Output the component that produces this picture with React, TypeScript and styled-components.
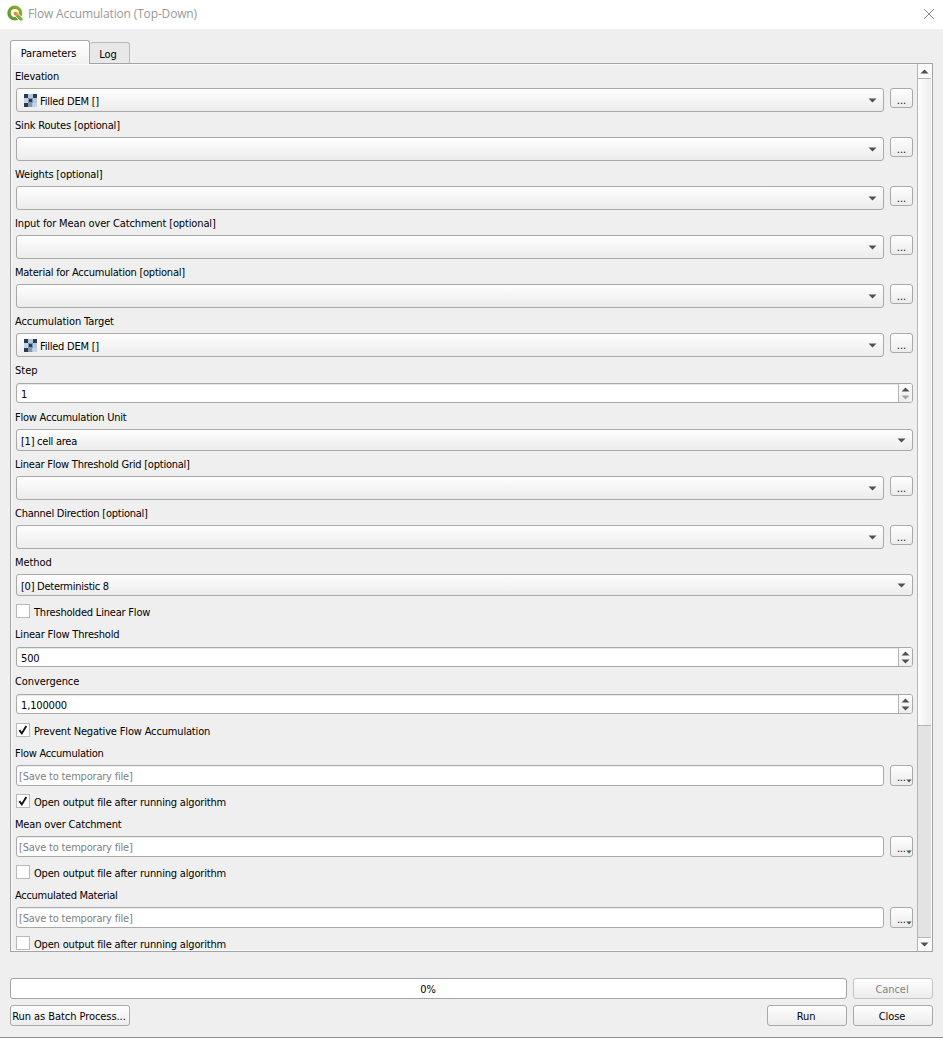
import React from "react";
import styled, { createGlobalStyle, css } from "styled-components";

const Global = createGlobalStyle`
  * { box-sizing: border-box; }
  body { margin: 0; background: #efefef; }
`;

const raised = css`
  border: 1px solid #a9a9a9;
  border-radius: 3px;
  background: linear-gradient(#fefefe, #ececec);
`;

const Dialog = styled.div`
  width: 943px;
  height: 1038px;
  display: flex;
  flex-direction: column;
  overflow: hidden;
  background: #efefef;
  border-bottom: 1px solid #8c8c8c;
  color: #000;
  font: 11px/13px "DejaVu Sans Condensed", "DejaVu Sans", sans-serif;
  font-stretch: condensed;
  white-space: nowrap;
`;

const TitleBar = styled.header`
  flex: none;
  height: 29px;
  padding: 0 8px 2px 7px;
  display: flex;
  align-items: center;
  background: #fff;
`;

const Title = styled.h1`
  flex: 1;
  margin: 1px 0 0 4px;
  color: #999;
  font: 400 12px/16px "Open Sans", sans-serif;
  letter-spacing: -0.15px;
`;

const Body = styled.main`
  flex: 1;
  padding: 11px 10px 0;
`;

const Tabs = styled.nav`
  height: 24px;
  display: flex;
  align-items: flex-end;
  position: relative;
  z-index: 1;
`;

const Tab = styled.div<{ $active?: boolean; $width: number }>`
  width: ${(p) => p.$width}px;
  height: ${(p) => (p.$active ? 24 : 21)}px;
  margin-bottom: ${(p) => (p.$active ? 0 : 1)}px;
  padding: ${(p) => (p.$active ? 6 : 5)}px 3px 0 0;
  border: 1px solid ${(p) => (p.$active ? "#a9a9a9" : "#b9b9b9")};
  border-left-width: ${(p) => (p.$active ? 1 : 0)}px;
  border-bottom: 0;
  border-radius: 3px 3px 0 0;
  background: ${(p) => (p.$active ? "linear-gradient(#fff, #f7f7f7 60%, #f0f0f0)" : "#e8e8e8")};
  text-align: center;
  letter-spacing: -0.1px;
`;

const Panel = styled.section`
  width: 923px;
  height: 889px;
  margin-top: -1px;
  display: flex;
  overflow: hidden;
  border: 1px solid #a3a3a3;
  box-shadow: inset 0 0 0 1px #fafafa;
`;

const Form = styled.div`
  flex: 1;
  padding: 5px 4px 0 5px;
  display: flex;
  flex-direction: column;
  gap: 6px;
`;

const Text = styled.span<{ $spacing?: number }>`
  letter-spacing: ${(p) => p.$spacing ?? 0}px;
`;

const Field = styled.div`
  flex: none;
  display: flex;
  flex-direction: column;
  gap: 5px;
  > ${Text} { padding-top: 1px; margin-left: -1px; }
`;

const Line = styled.div`
  display: flex;
  align-items: flex-start;
  gap: 6px;
`;

const Combo = styled.div<{ $tall?: boolean }>`
  ${raised}
  flex: 1;
  height: ${(p) => (p.$tall ? 24 : 22)}px;
  padding: 1px 6px 0 ${(p) => (p.$tall ? 7 : 4)}px;
  display: flex;
  align-items: center;
  gap: 3px;
  ${Text} { margin-top: ${(p) => (p.$tall ? 2 : 1)}px; }
  svg:last-child { margin-left: auto; }
`;

const Dots = styled.button<{ $menu?: boolean }>`
  ${raised}
  width: 23px;
  height: ${(p) => (p.$menu ? 21 : 20)}px;
  padding: 0 0 ${(p) => (p.$menu ? 2 : 1)}px ${(p) => (p.$menu ? 6 : 0)}px;
  display: flex;
  align-items: flex-end;
  justify-content: ${(p) => (p.$menu ? "flex-start" : "center")};
  color: #202;
  font: inherit;
  line-height: 10px;
  letter-spacing: ${(p) => (p.$menu ? -0.3 : 0)}px;
  svg { flex: none; }
`;

const Spin = styled.div`
  flex: 1;
  height: 20px;
  margin: 1px 0;
  display: flex;
  align-items: stretch;
  overflow: hidden;
  border: 1px solid #a9a9a9;
  border-radius: 3px;
  background: #fff;
  box-shadow: inset 0 1px 0 #e8e8e8;
`;

const SpinValue = styled.div`
  flex: 1;
  padding: 4px 0 0 4px;
  letter-spacing: -0.15px;
`;

const SpinButtons = styled.div`
  width: 14px;
  padding-top: 3px;
  display: flex;
  flex-direction: column;
  align-items: center;
  gap: 3px;
  border-left: 1px solid #b4b4b4;
  background: linear-gradient(#fdfdfd, #ededed);
`;

const FileInput = styled.div`
  flex: 1;
  height: 21px;
  padding: 4px 0 0 2px;
  border: 1px solid #a9a9a9;
  border-radius: 3px;
  background: #fff;
  box-shadow: inset 0 1px 0 #eee;
  color: #7f7f7f;
  letter-spacing: -0.2px;
`;

const CheckRow = styled.div`
  flex: none;
  height: 19px;
  padding: 2px 0 0;
  display: flex;
  gap: 4px;
  ${Text} { margin-top: 2px; }
`;

const CheckBox = styled.span`
  width: 14px;
  height: 14px;
  display: flex;
  border: 1px solid #b9b9b9;
  background: #fff;
`;

const ScrollBar = styled.div`
  width: 15px;
  padding: 1px 1px 0 0;
  display: flex;
  flex-direction: column;
  border-left: 1px solid #b5b5b5;
`;

const ScrollButton = styled.div<{ $bottom?: boolean }>`
  height: 14px;
  padding-right: 1px;
  display: flex;
  align-items: center;
  justify-content: center;
  background: #fafafa;
  border: 0 solid #b5b5b5;
  border-width: ${(p) => (p.$bottom ? "1px 0 0" : "0 0 1px")};
`;

const Thumb = styled.div`
  height: 647px;
  border-bottom: 1px solid #b5b5b5;
  background: linear-gradient(90deg, #fefefe, #ededed);
`;

const Groove = styled.div`
  flex: 1;
  background: #e3e3e3;
`;

const Footer = styled.footer`
  margin-top: 26px;
  display: flex;
  flex-direction: column;
  gap: 6px;
`;

const FooterRow = styled.div`
  display: flex;
  gap: 6px;
`;

const Progress = styled.div`
  width: 837px;
  height: 21px;
  padding: 4px 1px 0 0;
  border: 1px solid #a3a3a3;
  border-radius: 3px;
  background: #fff;
  text-align: center;
`;

const Button = styled.button<{ $width: number; $push?: boolean }>`
  ${raised}
  width: ${(p) => p.$width}px;
  height: 21px;
  margin-right: ${(p) => (p.$push ? "auto" : 0)};
  padding: 1px 2px 0 0;
  color: #000;
  font: inherit;
  letter-spacing: -0.06px;
  text-align: center;
  &:disabled { color: #838383; border-color: #c4c4c4; }
`;

const Arrow = ({ up, dim, small }: { up?: boolean; dim?: boolean; small?: boolean }) => (
  <svg width={small ? 6 : 9} height={small ? 4 : 5} viewBox="0 0 9 5" preserveAspectRatio="none">
    <path d={up ? "M0.5 4.5L4.5 0.5L8.5 4.5Z" : "M0.5 0.5L4.5 4.5L8.5 0.5Z"} fill={dim ? "#a5a5a5" : "#505050"} />
  </svg>
);

const Raster = () => (
  <svg width="13" height="13" viewBox="0 0 13 13" shapeRendering="crispEdges">
    <rect width="13" height="13" fill="#b0c8e1" />
    <path d="M0 0h4v4H0zM9 0h4v4H9zM0 9h4v4H0z" fill="#2b3b4e" />
    <path d="M4 4h5v5H4zM4 9h4v4H4z" fill="#8097ae" />
    <path d="M5 5h3v3H5z" fill="#2b3b4e" />
    <path d="M0 4h4v5H0zM9 9h4v4H9z" fill="#c3d6e9" />
  </svg>
);

const Logo = () => (
  <svg width="17" height="17" viewBox="0 0 17 17">
    <defs>
      <linearGradient id="ring" x1="0" y1="1" x2="1" y2="0">
        <stop offset="0" stopColor="#589632" />
        <stop offset="1" stopColor="#93b023" />
      </linearGradient>
    </defs>
    <circle cx="7.8" cy="8" r="5.8" fill="none" stroke="url(#ring)" strokeWidth="3.4" />
    <path d="M8.6 9H11.4L16 13.2V16H13L8.6 11.6Z" fill="#7fb13a" stroke="#fff" strokeWidth="0.9" />
    <path d="M6.6 6.8H9.8L11.6 8.8L9 11.2L6.6 9.4Z" fill="#f0a04a" />
    <path d="M7.4 7.4H9.4V9.4H7.4Z" fill="#ee7913" />
  </svg>
);

type Item =
  | { kind: "layer"; label: string; value?: string; s: number }
  | { kind: "choice" | "number"; label: string; value: string; s: number; min?: boolean }
  | { kind: "file"; label: string; s: number }
  | { kind: "check"; label: string; on?: boolean; s: number };

const open = "Open output file after running algorithm";

// `s` is the tracking of each label, in pixels.
const items: Item[] = [
  { kind: "layer", label: "Elevation", value: "Filled DEM []", s: -0.22 },
  { kind: "layer", label: "Sink Routes [optional]", s: -0.19 },
  { kind: "layer", label: "Weights [optional]", s: -0.17 },
  { kind: "layer", label: "Input for Mean over Catchment [optional]", s: -0.14 },
  { kind: "layer", label: "Material for Accumulation [optional]", s: -0.24 },
  { kind: "layer", label: "Accumulation Target", value: "Filled DEM []", s: -0.11 },
  { kind: "number", label: "Step", value: "1", min: true, s: 0 },
  { kind: "choice", label: "Flow Accumulation Unit", value: "[1] cell area", s: -0.23 },
  { kind: "layer", label: "Linear Flow Threshold Grid [optional]", s: -0.23 },
  { kind: "layer", label: "Channel Direction [optional]", s: -0.24 },
  { kind: "choice", label: "Method", value: "[0] Deterministic 8", s: -0.08 },
  { kind: "check", label: "Thresholded Linear Flow", s: -0.2 },
  { kind: "number", label: "Linear Flow Threshold", value: "500", s: -0.19 },
  { kind: "number", label: "Convergence", value: "1,100000", s: -0.1 },
  { kind: "check", label: "Prevent Negative Flow Accumulation", on: true, s: -0.16 },
  { kind: "file", label: "Flow Accumulation", s: -0.27 },
  { kind: "check", label: open, on: true, s: -0.18 },
  { kind: "file", label: "Mean over Catchment", s: -0.17 },
  { kind: "check", label: open, s: -0.18 },
  { kind: "file", label: "Accumulated Material", s: -0.28 },
  { kind: "check", label: open, s: -0.18 },
];

const Row = ({ item }: { item: Item }) => {
  if (item.kind === "check") {
    return (
      <CheckRow>
        <CheckBox>
          {item.on && (
            <svg width="12" height="12" viewBox="0 0 12 12">
              <path d="M2.3 6.2L4.8 9.4L9.3 2" fill="none" stroke="#111" strokeWidth="1.9" />
            </svg>
          )}
        </CheckBox>
        <Text $spacing={item.s}>{item.label}</Text>
      </CheckRow>
    );
  }
  return (
    <Field>
      <Text $spacing={item.s}>{item.label}</Text>
      <Line>
        {item.kind === "layer" && (
          <>
            <Combo $tall>
              {item.value && <Raster />}
              {item.value && <Text $spacing={-0.23}>{item.value}</Text>}
              <Arrow />
            </Combo>
            <Dots>...</Dots>
          </>
        )}
        {item.kind === "choice" && (
          <Combo>
            <Text $spacing={-0.26}>{item.value}</Text>
            <Arrow />
          </Combo>
        )}
        {item.kind === "number" && (
          <Spin>
            <SpinValue>{item.value}</SpinValue>
            <SpinButtons>
              <Arrow up />
              <Arrow dim={item.min} />
            </SpinButtons>
          </Spin>
        )}
        {item.kind === "file" && (
          <>
            <FileInput>[Save to temporary file]</FileInput>
            <Dots $menu>
              ...
              <Arrow small />
            </Dots>
          </>
        )}
      </Line>
    </Field>
  );
};

export default function App() {
  return (
    <Dialog>
      <Global />
      <TitleBar>
        <Logo />
        <Title>Flow Accumulation (Top-Down)</Title>
        <svg width="12" height="12" viewBox="0 0 12 12">
          <path d="M1 1L11 11M11 1L1 11" stroke="#8a8a8a" strokeWidth="1" />
        </svg>
      </TitleBar>
      <Body>
        <Tabs>
          <Tab $active $width={80}>Parameters</Tab>
          <Tab $width={40}>Log</Tab>
        </Tabs>
        <Panel>
          <Form>
            {items.map((item, i) => (
              <Row key={i} item={item} />
            ))}
          </Form>
          <ScrollBar>
            <ScrollButton><Arrow up /></ScrollButton>
            <Thumb />
            <Groove />
            <ScrollButton $bottom><Arrow /></ScrollButton>
          </ScrollBar>
        </Panel>
        <Footer>
          <FooterRow>
            <Progress>0%</Progress>
            <Button $width={80} disabled>Cancel</Button>
          </FooterRow>
          <FooterRow>
            <Button $width={120} $push>Run as Batch Process...</Button>
            <Button $width={80}>Run</Button>
            <Button $width={80}>Close</Button>
          </FooterRow>
        </Footer>
      </Body>
    </Dialog>
  );
}
